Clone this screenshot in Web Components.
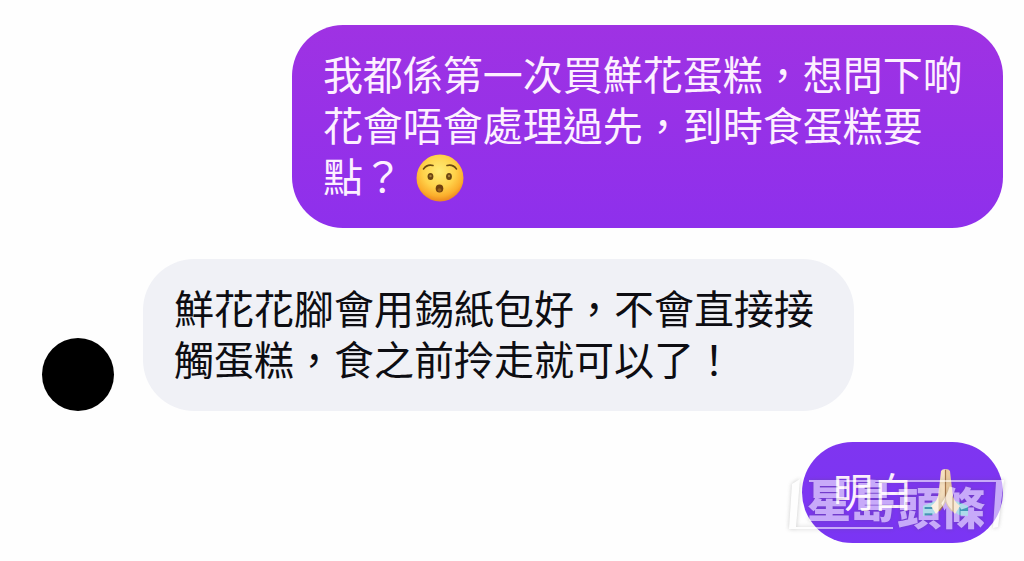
<!DOCTYPE html>
<html lang="zh-Hant-HK">
<head>
<meta charset="utf-8">
<meta name="viewport" content="width=device-width, initial-scale=1">
<title>對話</title>
<style>
body { margin: 0; background: #fefefe; font-family: "Noto Sans CJK TC", "Noto Sans", sans-serif; }
</style>
</head>
<body>
<chat-thread>
  <chat-message side="out" tone="warm">我都係第一次買鮮花蛋糕，想問下啲花會唔會處理過先，到時食蛋糕要點？ <emoji-hushed></emoji-hushed></chat-message>
  <chat-message side="in">鮮花花腳會用錫紙包好，不會直接接觸蛋糕，食之前拎走就可以了！</chat-message>
  <chat-message side="out" tone="cool">明白 <emoji-pray></emoji-pray><news-mark slot="overlay"></news-mark></chat-message>
</chat-thread>
<script>
class Base extends HTMLElement {
  constructor() {
    super();
    this.attachShadow({ mode: "open" }).innerHTML = this.constructor.markup;
  }
}

class ChatThread extends Base {
  static markup = `
    <style>
      :host { display: flex; flex-direction: column; gap: 31px; padding: 25px 21px 16px 42px; }
    </style>
    <slot></slot>`;
}

class ChatMessage extends Base {
  static markup = `
    <style>
      :host { display: flex; align-items: flex-end; gap: 29px; position: relative; }
      :host([side="out"]) { justify-content: flex-end; }
      .avatar { flex: none; width: 72px; height: 73px; border-radius: 50%; background: #000; }
      :host([side="out"]) .avatar { display: none; }
      .bubble {
        box-sizing: border-box; max-width: 74%; margin: 0; padding: 23px 29px 27px 31px;
        border-radius: 51px; background: #f0f1f6; color: #0d0d12;
        font-size: 40px; line-height: 51px; font-weight: 400;
      }
      :host([side="out"]) .bubble { color: #fdf0ff; }
      :host([tone="warm"]) .bubble { background: linear-gradient(#9f32e3, #8e30ec); }
      :host([tone="cool"]) .bubble { background: linear-gradient(#7f35f0, #7a35f4); }
    </style>
    <div class="avatar"></div>
    <p class="bubble"><slot></slot></p>
    <slot name="overlay"></slot>`;
}

class EmojiHushed extends Base {
  static markup = `
    <style>
      :host { display: inline-block; width: 48px; height: 48px; margin: -10px 0 -4px 4px; vertical-align: middle; line-height: 0; }
      svg { width: 100%; height: 100%; }
    </style>
    <svg viewBox="0 0 48 48" role="img" aria-label="驚訝">
      <defs>
        <radialGradient id="f" cx=".48" cy=".36" r=".62">
          <stop offset="0" stop-color="#ffec78"/><stop offset=".55" stop-color="#ffd24a"/>
          <stop offset=".85" stop-color="#fbae2c"/><stop offset="1" stop-color="#ee8c22"/>
        </radialGradient>
      </defs>
      <circle cx="24" cy="24" r="23.5" fill="url(#f)"/>
      <path d="M7.500 15Q11 10 17 11.500M31 11.500Q37 10 40.500 15" fill="none" stroke="#6d4a10" stroke-width="1.600" stroke-linecap="round"/>
      <ellipse cx="14.500" cy="22.500" rx="2.900" ry="3.500" fill="#6b4512"/>
      <ellipse cx="33" cy="22.500" rx="2.900" ry="3.500" fill="#6b4512"/>
      <circle cx="14.500" cy="22" r="1.200" fill="#a8813a"/><circle cx="33" cy="22" r="1.200" fill="#a8813a"/>
      <ellipse cx="23.500" cy="34.500" rx="3.800" ry="4" fill="#6f3f10"/>
      <ellipse cx="23.500" cy="36" rx="2" ry="1.800" fill="#94601c"/>
    </svg>`;
}

class EmojiPray extends Base {
  static markup = `
    <style>
      :host { display: inline-block; width: 48px; height: 48px; margin: -10px 4px -4px 0; vertical-align: middle; line-height: 0; }
      svg { width: 100%; height: 100%; }
    </style>
    <svg viewBox="0 0 48 48" role="img" aria-label="合十">
      <path d="M1 37L13 32L19 40L10 46L1 47Z" fill="#3fa9cf"/>
      <path d="M46 37L34 32L28 40L37 46L46 47Z" fill="#3fa9cf"/>
      <path d="M19 2Q20 0 23.500 0V30Q23 36 14 45L9 37Q16 32 16.500 24Z" fill="#f6dfbe"/>
      <path d="M28 2Q27 0 23.500 0V30Q24 36 33 45L38 37Q31 32 30.500 24Z" fill="#eccb9f"/>
      <path d="M23.500 1V30Q23 36 17 42M23.500 30Q24 36 30 42" fill="none" stroke="#a9784e" stroke-width="1.200"/>
    </svg>`;
}

class NewsMark extends Base {
  static markup = `
    <style>
      :host { position: absolute; right: -4px; bottom: 10px; width: 220px; height: 56px; opacity: .58; pointer-events: none; }
      svg { display: block; width: 100%; height: 100%; overflow: visible; filter: drop-shadow(0 0 2px #5558); }
      text { font-family: "Noto Sans CJK TC", sans-serif; font-size: 44px; font-weight: 900; fill: #fff; }
    </style>
    <svg viewBox="0 0 220 56">
      <path d="M13 2L5 7L2 52H106V50H9ZM22 3H217L211 50L206 51L209 5H22Z" fill="#fff"/>
      <text x="20" y="41">星島</text>
      <text x="110" y="48">頭條</text>
    </svg>`;
}

customElements.define("chat-thread", ChatThread);
customElements.define("chat-message", ChatMessage);
customElements.define("emoji-hushed", EmojiHushed);
customElements.define("emoji-pray", EmojiPray);
customElements.define("news-mark", NewsMark);
</script>
</body>
</html>
